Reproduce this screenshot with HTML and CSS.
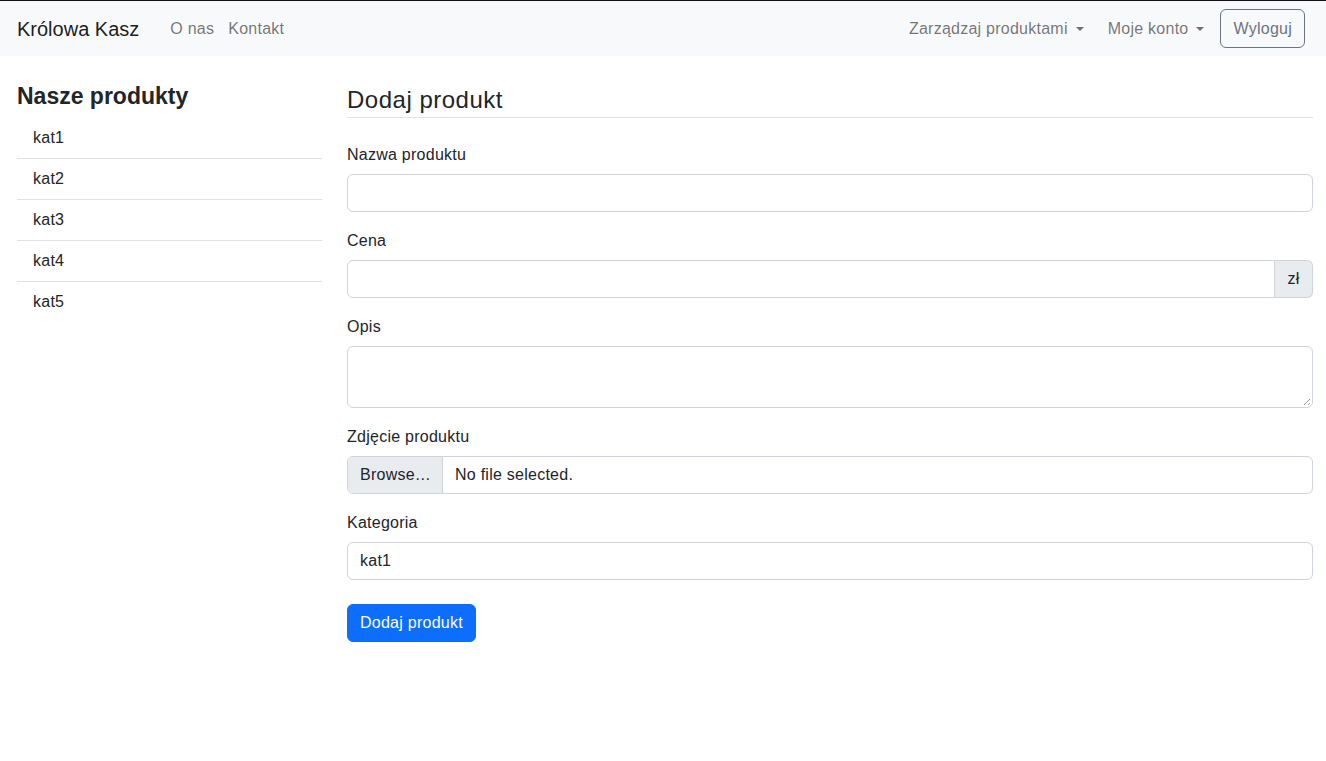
FILE: index.html
```html
<!DOCTYPE html>
<html lang="pl">
<head>
<meta charset="utf-8">
<title>Królowa Kasz</title>
<link rel="stylesheet" href="styles.css">
</head>
<body>
<nav class="navbar">
  <div class="nav-left">
    <a class="brand" href="#">Królowa Kasz</a>
    <a class="nav-link" href="#">O nas</a>
    <a class="nav-link" href="#">Kontakt</a>
  </div>
  <div class="nav-right">
    <a class="nav-link dropdown" href="#">Zarządzaj produktami</a>
    <a class="nav-link dropdown" href="#">Moje konto</a>
    <button class="btn-outline" type="button">Wyloguj</button>
  </div>
</nav>
<div class="page">
  <aside class="sidebar">
    <h4 class="side-title">Nasze produkty</h4>
    <ul class="list">
      <li class="list-item">kat1</li>
      <li class="list-item">kat2</li>
      <li class="list-item">kat3</li>
      <li class="list-item">kat4</li>
      <li class="list-item">kat5</li>
    </ul>
  </aside>
  <main class="main">
    <h3 class="main-title">Dodaj produkt</h3>
    <form class="form">
      <div class="field">
        <label class="label">Nazwa produktu</label>
        <div class="control"></div>
      </div>
      <div class="field">
        <label class="label">Cena</label>
        <div class="group">
          <div class="control grow"></div>
          <span class="addon">zł</span>
        </div>
      </div>
      <div class="field">
        <label class="label">Opis</label>
        <div class="control textarea"><span class="grip"></span></div>
      </div>
      <div class="field">
        <label class="label">Zdjęcie produktu</label>
        <div class="control file">
          <span class="file-btn">Browse…</span>
          <span class="file-name">No file selected.</span>
        </div>
      </div>
      <div class="field last">
        <label class="label">Kategoria</label>
        <div class="control select">kat1</div>
      </div>
      <button class="btn-primary" type="button">Dodaj produkt</button>
    </form>
  </main>
</div>
</body>
</html>
```

FILE: styles.css
```css
* { box-sizing: border-box; }
html, body { margin: 0; padding: 0; }
body {
  font-family: "Liberation Sans", Arial, sans-serif;
  font-size: 16px;
  line-height: 24px;
  letter-spacing: 0.25px;
  color: #212529;
  background: #fff;
}
.navbar {
  height: 56px;
  border-top: 1px solid #111;
  background: #f8f9fa;
  display: flex;
  align-items: center;
  justify-content: space-between;
  padding: 0 21px 0 17px;
}
.nav-left, .nav-right { display: flex; align-items: center; }
.brand {
  font-size: 20px;
  letter-spacing: 0;
  color: rgba(0,0,0,.9);
  text-decoration: none;
  margin-right: 23px;
  line-height: 30px;
}
.nav-link {
  color: rgba(0,0,0,.55);
  text-decoration: none;
  padding: 8px 8px;
}
.nav-left .nav-link + .nav-link { padding-left: 6px; }
.nav-right .nav-link { margin-right: 8px; }
.dropdown::after {
  content: "";
  display: inline-block;
  margin-left: 8px;
  vertical-align: 3px;
  border-top: 4.8px solid;
  border-right: 4.8px solid transparent;
  border-left: 4.8px solid transparent;
}
.btn-outline {
  font: inherit;
  letter-spacing: inherit;
  color: #6c757d;
  background: transparent;
  border: 1px solid #6c757d;
  border-radius: 6px;
  padding: 6px 12px;
  height: 39px;
}
.page {
  display: grid;
  grid-template-columns: 305px 966px;
  column-gap: 25px;
  padding: 24px 13px 0 17px;
}
.side-title {
  margin: 2px 0 7px;
  font-size: 23px;
  font-weight: 700;
  letter-spacing: 0;
  line-height: 29px;
}
.list { list-style: none; margin: 0; padding: 0; }
.list-item {
  padding: 8px 16px;
  border-bottom: 1px solid #dee2e6;
}
.list-item:last-child { border-bottom: 0; }
.main-title {
  margin: 5px 0 24px;
  font-size: 24px;
  font-weight: 400;
  letter-spacing: 0.5px;
  line-height: 29px;
  padding-bottom: 3px;
  border-bottom: 1px solid #dee2e6;
}
.field { margin-bottom: 16px; }
.field.last { margin-bottom: 24px; }
.label { display: block; padding-top: 1px; margin-bottom: 7px; }
.control {
  height: 38px;
  border: 1px solid #ced4da;
  border-radius: 6px;
  background: #fff;
  padding: 6px 12px;
}
.group { display: flex; }
.group .grow { flex: 1; border-radius: 6px 0 0 6px; }
.addon {
  width: 38px;
  height: 38px;
  display: flex;
  align-items: center;
  justify-content: center;
  background: #e9ecef;
  border: 1px solid #ced4da;
  border-left: 0;
  border-radius: 0 6px 6px 0;
}
.textarea { height: 62px; position: relative; }
.grip {
  position: absolute;
  right: 2px;
  bottom: 2px;
  width: 9px;
  height: 9px;
  background: repeating-linear-gradient(135deg, transparent 0 2px, #999 2px 3px);
  clip-path: polygon(100% 0, 100% 100%, 0 100%);
}
.file { display: flex; padding: 0; overflow: hidden; }
.file-btn {
  background: #e9ecef;
  border-right: 1px solid #ced4da;
  padding: 6px 12px;
  width: 95px;
}
.file-name { padding: 6px 12px; }
.btn-primary {
  font: inherit;
  letter-spacing: inherit;
  color: #fff;
  background: #0d6efd;
  border: 1px solid #0d6efd;
  border-radius: 6px;
  padding: 6px 12px;
  height: 38px;
}
```
